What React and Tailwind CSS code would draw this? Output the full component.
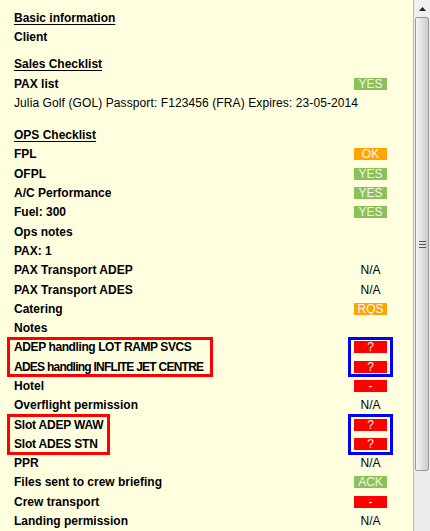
import React from 'react';

// status badge colours
const badgeColors = {
  YES: 'bg-[#8bc157]',
  ACK: 'bg-[#8bc157]',
  OK: 'bg-[#ffa500]',
  RQS: 'bg-[#ffa500]',
  '?': 'bg-[#ff0000]',
  '-': 'bg-[#ff0000]',
};

const Status = ({ value }) => {
  if (!value) return null;
  if (value === 'N/A') {
    return <div className="w-[33px] shrink-0 text-center font-normal text-black">N/A</div>;
  }
  return (
    <div
      className={`w-[33px] h-[12px] shrink-0 flex items-center justify-center text-[12px] leading-none font-normal text-[#f4f4f4] ${badgeColors[value]}`}
    >
      {value}
    </div>
  );
};

const Row = ({ label, status, bold = true, tight = '' }) => (
  <div className="h-[19.3px] flex items-center justify-between pr-[26px]">
    <span className={`whitespace-nowrap ${bold ? 'font-bold' : 'font-normal tracking-[0.1px]'} ${tight}`}>{label}</span>
    <Status value={status} />
  </div>
);

const Heading = ({ children }) => (
  <div className="h-[19.3px] flex items-center">
    <span className="font-bold underline underline-offset-[2px]">{children}</span>
  </div>
);

// rows wrapped in the red/blue annotation boxes
const Marked = ({ rows, redWidth }) => (
  <div className="relative">
    {rows.map((r) => (
      <Row key={r.label} label={r.label} status={r.status} tight={r.tight} />
    ))}
    <div
      className="absolute top-[-1px] bottom-[-1px] left-[-7px] border-[3px] border-[#ff0000] pointer-events-none"
      style={{ width: redWidth }}
    />
    <div className="absolute top-[-1px] bottom-[-1px] left-[334px] w-[45px] border-[3px] border-[#0000ff] pointer-events-none" />
  </div>
);

const Scrollbar = () => (
  <div className="w-[17px] h-full flex flex-col bg-[#ececec] border-l border-[#b8b8b8]">
    <div className="h-[17px] flex items-center justify-center bg-[#f0f0f0]">
      <svg width="7" height="4" viewBox="0 0 7 4">
        <path d="M0 4 L3.5 0 L7 4 Z" fill="#222" />
      </svg>
    </div>
    <div className="h-[454px] mx-[1px] rounded-[2px] border border-[#9a9a9a] bg-gradient-to-r from-[#f4f4f4] via-[#e2e2e2] to-[#c9c9c9] flex items-center justify-center">
      <div className="flex flex-col gap-[2px]">
        <div className="w-[7px] h-[1px] bg-[#555]" />
        <div className="w-[7px] h-[1px] bg-[#555]" />
        <div className="w-[7px] h-[1px] bg-[#555]" />
      </div>
    </div>
    <div className="flex-1" />
  </div>
);

export default function App() {
  return (
    <div className="w-[430px] h-[531px] overflow-hidden flex bg-[#ffffe0] text-[12px] text-black font-['Liberation_Sans',Arial,sans-serif]">
      <div className="flex-1 pl-[14px] pt-[8px]">
        <Heading>Basic information</Heading>
        <Row label="Client" />

        <div className="h-[8px]" />
        <Heading>Sales Checklist</Heading>
        <Row label="PAX list" status="YES" />
        <Row label="Julia Golf (GOL) Passport: F123456 (FRA) Expires: 23-05-2014" bold={false} />

        <div className="h-[13px]" />
        <Heading>OPS Checklist</Heading>
        <Row label="FPL" status="OK" />
        <Row label="OFPL" status="YES" />
        <Row label="A/C Performance" status="YES" />
        <Row label="Fuel: 300" status="YES" />
        <Row label="Ops notes" />
        <Row label="PAX: 1" />
        <Row label="PAX Transport ADEP" status="N/A" />
        <Row label="PAX Transport ADES" status="N/A" />
        <Row label="Catering" status="RQS" />
        <Row label="Notes" />
        <Marked
          redWidth="206px"
          rows={[
            { label: 'ADEP handling LOT RAMP SVCS', status: '?', tight: 'tracking-[-0.4px]' },
            { label: 'ADES handling INFLITE JET CENTRE', status: '?', tight: 'tracking-[-0.75px]' },
          ]}
        />
        <Row label="Hotel" status="-" />
        <Row label="Overflight permission" status="N/A" />
        <Marked
          redWidth="103px"
          rows={[
            { label: 'Slot ADEP WAW', status: '?', tight: 'tracking-[-0.2px]' },
            { label: 'Slot ADES STN', status: '?', tight: 'tracking-[-0.2px]' },
          ]}
        />
        <Row label="PPR" status="N/A" />
        <Row label="Files sent to crew briefing" status="ACK" />
        <Row label="Crew transport" status="-" />
        <Row label="Landing permission" status="N/A" />
      </div>
      <Scrollbar />
    </div>
  );
}
